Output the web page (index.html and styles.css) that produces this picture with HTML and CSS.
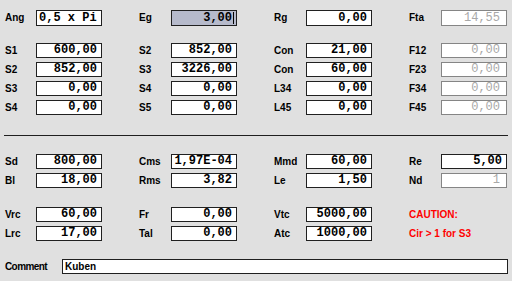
FILE: index.html
```html
<!DOCTYPE html>
<html>
<head>
<meta charset="utf-8">
<link rel="stylesheet" href="styles.css">
</head>
<body>
<div class="form">
  <div class="grid top">
    <span class="lbl">Ang</span><div class="fld fld-left">0,5 x Pi</div>
    <span class="lbl">Eg</span><div class="fld sel"><span>3,00</span><i class="caret"></i></div>
    <span class="lbl">Rg</span><div class="fld">0,00</div>
    <span class="lbl">Fta</span><div class="fld dis">14,55</div>
  </div>

  <div class="grid block b1">
    <span class="lbl">S1</span><div class="fld">600,00</div>
    <span class="lbl">S2</span><div class="fld">852,00</div>
    <span class="lbl">Con</span><div class="fld">21,00</div>
    <span class="lbl">F12</span><div class="fld dis">0,00</div>

    <span class="lbl">S2</span><div class="fld">852,00</div>
    <span class="lbl">S3</span><div class="fld">3226,00</div>
    <span class="lbl">Con</span><div class="fld">60,00</div>
    <span class="lbl">F23</span><div class="fld dis">0,00</div>

    <span class="lbl">S3</span><div class="fld">0,00</div>
    <span class="lbl">S4</span><div class="fld">0,00</div>
    <span class="lbl">L34</span><div class="fld">0,00</div>
    <span class="lbl">F34</span><div class="fld dis">0,00</div>

    <span class="lbl">S4</span><div class="fld">0,00</div>
    <span class="lbl">S5</span><div class="fld">0,00</div>
    <span class="lbl">L45</span><div class="fld">0,00</div>
    <span class="lbl">F45</span><div class="fld dis">0,00</div>
  </div>

  <div class="sep"></div>

  <div class="grid block b2">
    <span class="lbl">Sd</span><div class="fld">800,00</div>
    <span class="lbl">Cms</span><div class="fld">1,97E-04</div>
    <span class="lbl">Mmd</span><div class="fld">60,00</div>
    <span class="lbl">Re</span><div class="fld">5,00</div>

    <span class="lbl">Bl</span><div class="fld">18,00</div>
    <span class="lbl">Rms</span><div class="fld">3,82</div>
    <span class="lbl">Le</span><div class="fld">1,50</div>
    <span class="lbl">Nd</span><div class="fld dis">1</div>
  </div>

  <div class="grid block b3">
    <span class="lbl">Vrc</span><div class="fld">60,00</div>
    <span class="lbl">Fr</span><div class="fld">0,00</div>
    <span class="lbl">Vtc</span><div class="fld">5000,00</div>
    <span class="warn">CAUTION:</span>

    <span class="lbl">Lrc</span><div class="fld">17,00</div>
    <span class="lbl">Tal</span><div class="fld">0,00</div>
    <span class="lbl">Atc</span><div class="fld">1000,00</div>
    <span class="warn">Cir &gt; 1 for S3</span>
  </div>

  <div class="comment-row">
    <span class="lbl lbl-comment">Comment</span>
    <div class="fld comment">Kuben</div>
  </div>
</div>
</body>
</html>
```

FILE: styles.css
```css
html, body {
  margin: 0;
  padding: 0;
  background: #e0e0e0;
}
body {
  width: 512px;
  height: 281px;
  overflow: hidden;
}
.form {
  padding: 10px 0 0 5px;
}
.grid {
  display: grid;
  grid-template-columns: 31px 103px 32px 103px 32px 103px 32px 66px;
  grid-auto-rows: 15px;
  row-gap: 4px;
}
.top {
  grid-auto-rows: 16px;
}
.b1 { margin-top: 17px; }
.b2 { margin-top: 18px; }
.b3 { margin-top: 19px; }

.lbl {
  font-family: "Liberation Sans", Arial, sans-serif;
  font-weight: bold;
  font-size: 10px;
  line-height: 15px;
  color: #000;
  white-space: nowrap;
}
.top .lbl { line-height: 16px; }

.fld {
  box-sizing: border-box;
  width: 66px;
  height: 100%;
  border: 1px solid #202020;
  background: #fff;
  font-family: "Liberation Mono", "Courier New", monospace;
  font-weight: bold;
  font-size: 12px;
  line-height: 13px;
  text-align: right;
  padding: 0 4px 0 2px;
  color: #000;
  white-space: nowrap;
  overflow: hidden;
}
.top .fld { line-height: 14px; }
.fld-left {
  text-align: left;
}
.sel {
  background: #b6bacb;
  display: flex;
  justify-content: flex-end;
  align-items: center;
  padding-right: 2px;
}
.caret {
  display: inline-block;
  width: 1px;
  height: 12px;
  background: #000;
  margin-left: 1px;
}
.dis {
  border-color: #858585;
  color: #a8a8a8;
  font-weight: normal;
  padding-right: 6px;
}
.warn {
  grid-column: 7 / span 2;
  font-family: "Liberation Sans", Arial, sans-serif;
  font-weight: bold;
  font-size: 10px;
  line-height: 15px;
  color: #ff0000;
  white-space: nowrap;
}
.sep {
  margin: 20px 0 0 -1px;
  width: 504px;
  height: 1px;
  background: #202020;
}
.comment-row {
  display: flex;
  height: 15px;
  margin-top: 18px;
}
.lbl-comment {
  width: 57px;
  letter-spacing: -0.6px;
}
.comment {
  width: 446px;
  text-align: left;
  font-family: "Liberation Sans", Arial, sans-serif;
  font-size: 10px;
  font-weight: bold;
  padding-left: 2px;
}
```
